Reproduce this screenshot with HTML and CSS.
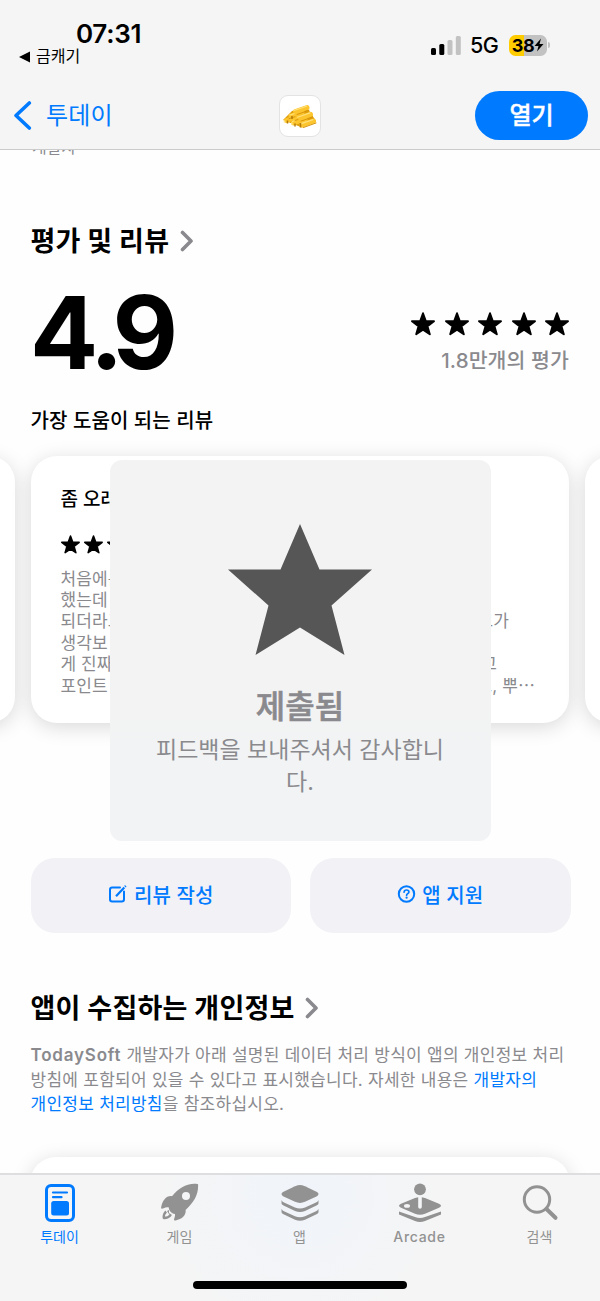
FILE: index.html
```html
<!DOCTYPE html>
<html lang="ko">
<head>
<meta charset="utf-8">
<title>App Store</title>
<link rel="stylesheet" href="styles.css">
</head>
<body>
<svg class="defs" width="0" height="0" aria-hidden="true">
  <symbol id="star" viewBox="0 0 24 24"><path d="M12 1.200 14.800 9 23 9.200 16.500 14.300 18.800 22.300 12 17.700 5.200 22.300 7.500 14.300 1 9.200 9.200 9Z" fill="currentColor" stroke="currentColor" stroke-width="1.900" stroke-linejoin="round"/></symbol>
  <symbol id="chevron" viewBox="0 0 14 22"><path d="M2.500 2.500 11 11 2.500 19.500" fill="none" stroke="currentColor" stroke-width="3.600" stroke-linecap="round" stroke-linejoin="round"/></symbol>
</svg>
<div class="phone">
  <header class="header">
    <div class="status">
      <div class="status-left">
        <div class="time">07:31</div>
        <div class="return"><svg width="12" height="12" viewBox="0 0 12 12"><path d="M0 6 11 .5v11z"/></svg><span>금캐기</span></div>
      </div>
      <div class="status-right">
        <svg class="signal" width="30" height="19" viewBox="0 0 30 19"><rect y="12" width="5" height="7" rx="1.500"/><rect x="8.300" y="8" width="5" height="11" rx="1.500"/><g fill="#c2c2c2"><rect x="16.500" y="4" width="5" height="15" rx="1.500"/><rect x="24.800" width="5" height="19" rx="1.500"/></g></svg>
        <span class="network">5G</span>
        <div class="battery"><span>38</span><svg width="10" height="14" viewBox="0 0 10 14"><path d="M7 .5.5 8h4L3 13.500 9.500 6h-4z"/></svg></div>
        <i class="battery-cap"></i>
      </div>
    </div>
    <div class="nav">
      <a class="back"><svg width="19" height="30" viewBox="0 0 19 30"><path d="M16.300 2 3 14.500l13.300 12.500" fill="none" stroke="#007aff" stroke-width="3.600" stroke-linecap="round" stroke-linejoin="round"/></svg><span>투데이</span></a>
      <div class="app-icon">
        <svg width="36" height="26" viewBox="0 0 36 26">
          <path d="M1 17 10 8 24 3l10 15-14 6.500Z" fill="#e0a00c"/>
          <g stroke-linecap="round" stroke-width="5" stroke="#fdc52d"><path d="M4.500 17.500 16 13.500M11.500 20 23 16M20 22 31.500 18M9 13 20 9M17 15.300 28.500 11.300M13.500 8.500 25 4.500"/></g>
          <path d="M12 7.500 24.500 3.200M15.500 14.200 28 9.900M18.500 20.900 31 16.600M8 12l4-1.300M10.500 18.500l3-1" stroke="#ffe07a" stroke-width="1.200" stroke-linecap="round"/>
          <path d="M15 11.500 27 7.300M19 18.100 30.500 14.100M7 15.700l6-2M13 17.500l3-1M21.500 24.500 34 20" stroke="#d8950b" stroke-width="1" stroke-linecap="round"/>
          <path d="M5.500 17.500v3M13 20.500v3M10 13v3M18.500 20v4.500" stroke="#b37a08" stroke-width="1.500"/>
          <path d="M2.500 17.500v2M9.800 19.500v2.500" stroke="#ffe58c" stroke-width="1.500"/>
        </svg>
      </div>
      <a class="open">열기</a>
    </div>
  </header>

  <main class="content">
    <div class="cutoff">개발자</div>
    <h2 class="section-title"><span>평가 및 리뷰</span><svg width="14" height="22"><use href="#chevron"/></svg></h2>
    <div class="rating">
      <div class="score">4<span>.</span>9</div>
      <div class="rating-side">
        <div class="stars"><svg><use href="#star"/></svg><svg><use href="#star"/></svg><svg><use href="#star"/></svg><svg><use href="#star"/></svg><svg><use href="#star"/></svg></div>
        <div class="count">1.8만개의 평가</div>
      </div>
    </div>
    <h3 class="helpful">가장 도움이 되는 리뷰</h3>
    <div class="reviews">
      <div class="card"></div>
      <article class="card">
        <h4 class="review-title">좀 오래</h4>
        <div class="stars small"><svg><use href="#star"/></svg><svg><use href="#star"/></svg><svg><use href="#star"/></svg></div>
        <div class="review-lines">
          <p><span>처음에는</span></p>
          <p><span>했는데</span></p>
          <p><span>되더라고</span><span class="end third">고가</span></p>
          <p><span>생각보</span></p>
          <p><span>게 진짜</span><span class="end fifth">고</span></p>
          <p><span>포인트</span><span class="end sixth">고, 뿌⋯</span></p>
        </div>
      </article>
      <div class="card"></div>
    </div>
    <div class="actions">
      <a class="action"><svg width="20" height="20" viewBox="0 0 20 20" fill="none" stroke="currentColor" stroke-width="2"><path d="M12 3.500H4.200Q2 3.500 2 5.700v9.600q0 2.200 2.200 2.200h9.600q2.200 0 2.200-2.200V7.500" stroke-linecap="round"/><path d="m8 12.200 8.300-8.800" stroke-width="2.200"/><path d="m17 2.700.8-.8" stroke-width="2.200"/></svg><span>리뷰 작성</span></a>
      <a class="action"><svg width="19" height="20" viewBox="0 0 19 20" fill="none" stroke="currentColor"><circle cx="9.500" cy="10" r="7.700" stroke-width="2"/><path d="M7.100 8.200c.1-1.500 1-2.200 2.400-2.200s2.400.8 2.400 2c0 1.600-2.300 1.700-2.300 3.200" stroke-width="1.700" stroke-linecap="round"/><circle cx="9.600" cy="13.700" r="1.100" fill="currentColor" stroke="none"/></svg><span>앱 지원</span></a>
    </div>
    <h2 class="section-title privacy-title"><span>앱이 수집하는 개인정보</span><svg width="14" height="22"><use href="#chevron"/></svg></h2>
    <p class="privacy"><b>TodaySoft</b> 개발자가 아래 설명된 데이터 처리 방식이 앱의 개인정보 처리<br>방침에 포함되어 있을 수 있다고 표시했습니다. 자세한 내용은 <a>개발자의<br>개인정보 처리방침</a>을 참조하십시오.</p>
    <div class="next-card"></div>
  </main>

  <nav class="tabs">
    <a class="tab active"><svg width="40" height="40" viewBox="0 0 40 40"><rect x="6.500" y="2.500" width="27" height="35" rx="4.500" fill="none" stroke="currentColor" stroke-width="3"/><path d="M13 9.500h14M13 14.200h8.500" stroke="currentColor" stroke-width="2.200" stroke-linecap="round"/><rect x="11.200" y="18" width="17.800" height="14.500" rx="2.500" fill="currentColor"/></svg><span>투데이</span></a>
    <a class="tab"><svg width="40" height="40" viewBox="0 0 40 40"><path fill="currentColor" fill-rule="evenodd" d="M37.500 1C27-.3 19 5 12 13.200c-5.500-.8-9.500 4-10.900 11.300.1 1.700 1.300 1.300 2.500.7 1.600-.8 3.600-1 5.200-.7 0 3 2.700 6 6.100 6.600.4 1.700-.2 3.200-.8 4.900-.3 1 .3 1.700 1.500 1.500 6.800-1.300 10.700-5.500 10-10.600C33.500 19.500 38.500 12 38.100 1.800Q38.100 1.100 37.500 1ZM26 9a4 4 0 1 1 0 8 4 4 0 0 1 0-8Z"/><path d="M6.200 28.500c-2.300 1.800-2.600 4.200-2.400 6.500 3 .1 5-.4 6.500-2.600" fill="none" stroke="currentColor" stroke-width="2.400" stroke-linejoin="round"/><path d="m7 28 2-1v3l3 2-1.500 1.600Z" fill="currentColor"/></svg><span>게임</span></a>
    <a class="tab"><svg width="40" height="40" viewBox="0 0 40 40" fill="currentColor"><path d="M20 2q2 0 5 1.200L37 9q3 2 0 4.200l-12 5.600q-5 2.200-10 0L3 13.200Q0 11 3 9l12-5.800Q18 2 20 2Z"/><path id="layer" d="M1.500 17q.5 1.500 2.500 2.500l11 5q5 2.200 10 0l11-5q2-1 2.500-2.500v3.500q0 1-2 2L25 28q-5 2.200-10 0L3.500 22.500q-2-1-2-2Z"/><use href="#layer" y="8.700"/></svg><span>앱</span></a>
    <a class="tab"><svg width="44" height="40" viewBox="0 0 44 40" fill="currentColor"><path fill-rule="evenodd" d="M20.200 14.200 17 15 3 20.800q-4 2 0 4l14 6q5 2 10 0l14-6q4-2 0-4L27 15l-3.200-.8V24a1.800 1.800 0 0 1-3.600 0ZM9 21a3 1.900 0 1 1 0 3.800A3 1.900 0 0 1 9 21Z"/><circle cx="22" cy="6.300" r="5.900"/><path d="M1 28.500 17 34q5 2 10 0l16-5.500v3L27 38q-5 2-10 0L1 31.500Z"/></svg><span class="latin">Arcade</span></a>
    <a class="tab"><svg width="40" height="40" viewBox="0 0 40 40" fill="none" stroke="currentColor" stroke-linecap="round"><circle cx="17" cy="16.500" r="12.700" stroke-width="3"/><path d="m26.500 26 9 8.800" stroke-width="4"/></svg><span>검색</span></a>
    <i class="home"></i>
  </nav>

  <div class="toast">
    <svg width="144" height="133" viewBox="0 0 144 133"><path fill="#565656" d="M72 0 91.500 45.500H144L103.500 81.500 116.500 131 72 103.500 27.500 131 40.500 81.500 0 45.500H52.500Z"/></svg>
    <strong>제출됨</strong>
    <p>피드백을 보내주셔서 감사합니<br>다.</p>
  </div>
</div>
</body>
</html>
```
FILE: styles.css
```css
* { box-sizing: border-box; }
body { margin: 0; font-family: Inter, "Noto Sans CJK KR", sans-serif; color: #000; background: #fefefe; }
h2, h3, h4, p { margin: 0; }
svg { display: block; flex: none; }
.defs { position: absolute; }
.phone { position: relative; width: 600px; height: 1301px; display: grid; grid-template-rows: 150px 1023px 128px; overflow: hidden; white-space: nowrap; }

.header { background: #f5f5f5; border-bottom: 1px solid #cbcbcb; }
.status { display: flex; justify-content: space-between; height: 82px; padding: 18px 50px 0 19px; }
.time { padding-left: 57px; font-size: 26px; font-weight: 600; line-height: 31px; letter-spacing: -.3px; }
.return { display: flex; align-items: center; gap: 5px; font-size: 16px; line-height: 15px; }
.status-right { display: flex; align-items: center; height: 54px; }
.network { margin-left: 9px; width: 39px; font-size: 21.500px; font-weight: 500; letter-spacing: -.6px; }
.battery { display: flex; align-items: center; justify-content: center; gap: 0; width: 38px; height: 21px; border-radius: 6.500px; background: linear-gradient(90deg, #ffcc00 15px, #c2c2c2 15px); font-size: 18px; font-weight: 700; line-height: 21px; letter-spacing: -.3px; }
.battery-cap { width: 2px; height: 6px; margin-left: 1px; border-radius: 0 3px 3px 0; background: #c2c2c2; }
.nav { display: grid; grid-template-columns: 1fr auto 1fr; align-items: center; padding: 9px 12px 0 13px; }
.back { display: flex; align-items: center; gap: 14px; color: #007aff; font-size: 24px; line-height: 30px; letter-spacing: .2px; }
.app-icon { display: grid; place-items: center; width: 42px; height: 42px; margin-right: 1px; border: 1px solid #e3e3e3; border-radius: 9px; background: #fff; }
.open { justify-self: end; width: 113px; height: 49px; border-radius: 25px; background: #007aff; color: #fff; font-size: 24px; font-weight: 500; -webkit-text-stroke: .4px #fff; line-height: 50px; text-align: center; }

.content { overflow: hidden; }
.cutoff { height: 7px; padding-left: 32px; color: #8a8a8e; font-size: 16px; line-height: 20px; display: flex; align-items: flex-end; }
.section-title { display: flex; align-items: center; gap: 10.500px; margin: 65px 30.500px 0; font-size: 27px; font-weight: 700; line-height: 40px; letter-spacing: .25px; }
.section-title svg { margin-bottom: 2px; color: #8a8a8e; }
.rating { display: flex; justify-content: space-between; height: 119px; padding: 10px 31px 0 30px; }
.score { font-size: 101px; font-weight: 700; line-height: 120px; letter-spacing: -8.500px; }
.score span { letter-spacing: -11px; }
.rating-side { display: flex; flex-direction: column; align-items: flex-end; padding-top: 40px; }
.stars { display: flex; gap: 9.500px; }
.stars svg { width: 24px; height: 24px; }
.count { margin-top: 12px; color: #8a8a8e; font-size: 20.500px; font-weight: 500; line-height: 26px; letter-spacing: .1px; }
.helpful { margin: 25px 30.500px 0; font-size: 20px; font-weight: 500; line-height: 30px; letter-spacing: .1px; }
.reviews { display: grid; grid-template-columns: repeat(3, 538.500px); gap: 16px; margin: 20px 0 0 -524px; }
.card { height: 267px; padding: 28px 30px; border-radius: 26px; background: #fff; box-shadow: 0 4px 20px rgba(0, 0, 0, .15); }
.review-title { font-size: 19px; font-weight: 500; line-height: 32px; }
.small { gap: 4px; margin-top: 19px; }
.small svg { width: 19px; height: 19px; }
.review-lines { margin-top: 14.500px; color: #8a8a8e; font-size: 17px; line-height: 21.400px; letter-spacing: .1px; }
.review-lines p { display: flex; justify-content: space-between; }
.third { margin-right: 30px; }
.fifth { margin-right: 42px; }
.sixth { margin-right: 4px; }
.actions { display: grid; grid-template-columns: 260.500px 260.500px; gap: 19px; margin: 135px 30px 0 30.500px; }
.action { display: flex; align-items: center; justify-content: center; gap: 6px; height: 74.500px; padding-bottom: 2px; border-radius: 24px; background: #f1f1f6; color: #007aff; font-size: 20px; font-weight: 500; letter-spacing: .1px; }
.privacy-title { margin-top: 56.500px; }
.privacy { margin: 14px 30px 0 30.500px; color: #8a8a8e; font-size: 17px; line-height: 24.500px; letter-spacing: .26px; }
.privacy b { font-weight: 600; letter-spacing: .8px; }
.privacy a { color: #007aff; }
.next-card { height: 100px; margin: 40px 30px 0; border-radius: 26px; background: #fff; box-shadow: 0 4px 20px rgba(0, 0, 0, .15); }

.tabs { position: relative; display: grid; grid-template-columns: repeat(5, 120px); border-top: 2px solid #dedee0; background: radial-gradient(circle at 300px 20px, #f0f4fa, #f5f5f5 150px); }
.tab { display: flex; flex-direction: column; align-items: center; padding: 8px 1px 0 0; color: #929292; font-size: 14px; line-height: 20px; font-weight: 400; }
.tab span { margin-top: 4px; }
.tab .latin { letter-spacing: .7px; font-weight: 500; }
.tab.active { color: #007aff; }
.home { position: absolute; left: 193px; bottom: 12px; width: 214px; height: 8px; border-radius: 4px; background: #000; }

.toast { position: absolute; left: 109.500px; top: 460px; width: 381px; height: 381px; padding-top: 64px; border-radius: 12px; background: linear-gradient(#f3f3f3 55%, #f1f3f5); color: #8a8a8e; text-align: center; display: flex; flex-direction: column; align-items: center; }
.toast strong { margin-top: 28px; font-size: 32px; line-height: 44px; font-weight: 500; -webkit-text-stroke: .6px #8a8a8e; }
.toast p { margin-top: 5px; font-size: 23px; line-height: 32px; }
```
